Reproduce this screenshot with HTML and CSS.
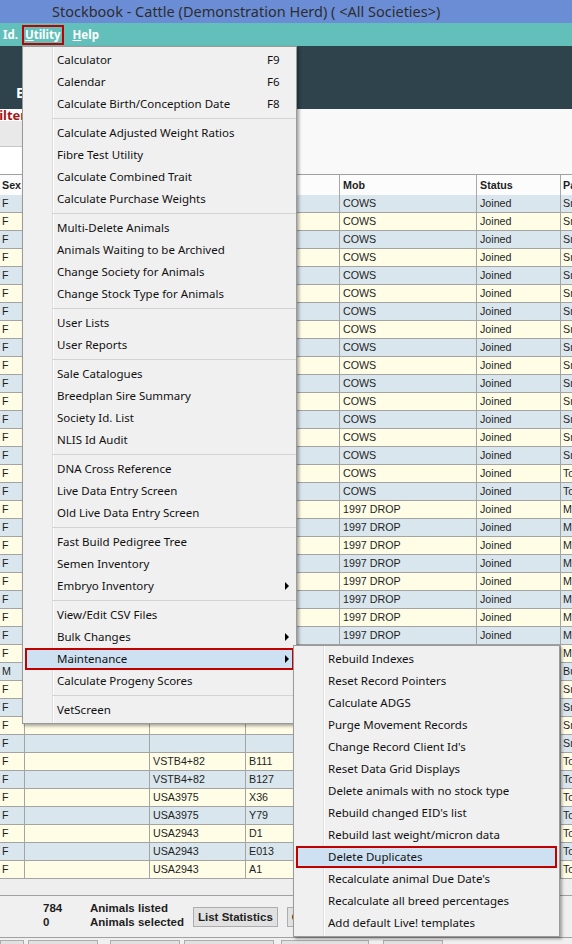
FILE: index.html
```html
<!DOCTYPE html>
<html lang="en">
<head>
  <meta charset="UTF-8" />
  <title>Stockbook - Cattle</title>
  <link rel="stylesheet" href="styles.css">
</head>
<body>
  <div class="titlebar">Stockbook - Cattle (Demonstration Herd) ( &lt;All Societies&gt;)</div>

  <div class="menubar">
    <span class="mitem">Id.</span>
    <span class="mitem open"><u>U</u>tility</span>
    <span class="mitem help"><u>H</u>elp</span>
  </div>

  <div class="banner"><span>E</span></div>

  <div class="filterzone">
    <div class="filter-left">
      <div class="filter-label">Filter</div>
      <div class="filter-band"></div>
    </div>
    <div class="filter-right"></div>
  </div>

  <div class="grid-head">
    <span>Sex</span><span></span><span></span><span></span><span>Mob</span><span>Status</span><span>Paddock</span>
  </div>
  <div class="grid-body">
    <div class="row b"><span>F</span><span></span><span></span><span></span><span>COWS</span><span>Joined</span><span>Small</span></div>
    <div class="row y"><span>F</span><span></span><span></span><span></span><span>COWS</span><span>Joined</span><span>Small</span></div>
    <div class="row b"><span>F</span><span></span><span></span><span></span><span>COWS</span><span>Joined</span><span>Small</span></div>
    <div class="row y"><span>F</span><span></span><span></span><span></span><span>COWS</span><span>Joined</span><span>Small</span></div>
    <div class="row b"><span>F</span><span></span><span></span><span></span><span>COWS</span><span>Joined</span><span>Small</span></div>
    <div class="row y"><span>F</span><span></span><span></span><span></span><span>COWS</span><span>Joined</span><span>Small</span></div>
    <div class="row b"><span>F</span><span></span><span></span><span></span><span>COWS</span><span>Joined</span><span>Small</span></div>
    <div class="row y"><span>F</span><span></span><span></span><span></span><span>COWS</span><span>Joined</span><span>Small</span></div>
    <div class="row b"><span>F</span><span></span><span></span><span></span><span>COWS</span><span>Joined</span><span>Small</span></div>
    <div class="row y"><span>F</span><span></span><span></span><span></span><span>COWS</span><span>Joined</span><span>Small</span></div>
    <div class="row b"><span>F</span><span></span><span></span><span></span><span>COWS</span><span>Joined</span><span>Small</span></div>
    <div class="row y"><span>F</span><span></span><span></span><span></span><span>COWS</span><span>Joined</span><span>Small</span></div>
    <div class="row b"><span>F</span><span></span><span></span><span></span><span>COWS</span><span>Joined</span><span>Small</span></div>
    <div class="row y"><span>F</span><span></span><span></span><span></span><span>COWS</span><span>Joined</span><span>Small</span></div>
    <div class="row b"><span>F</span><span></span><span></span><span></span><span>COWS</span><span>Joined</span><span>Small</span></div>
    <div class="row y"><span>F</span><span></span><span></span><span></span><span>COWS</span><span>Joined</span><span>Top</span></div>
    <div class="row b"><span>F</span><span></span><span></span><span></span><span>COWS</span><span>Joined</span><span>Top</span></div>
    <div class="row y"><span>F</span><span></span><span></span><span></span><span>1997 DROP</span><span>Joined</span><span>Middle</span></div>
    <div class="row b"><span>F</span><span></span><span></span><span></span><span>1997 DROP</span><span>Joined</span><span>Middle</span></div>
    <div class="row y"><span>F</span><span></span><span></span><span></span><span>1997 DROP</span><span>Joined</span><span>Middle</span></div>
    <div class="row b"><span>F</span><span></span><span></span><span></span><span>1997 DROP</span><span>Joined</span><span>Middle</span></div>
    <div class="row y"><span>F</span><span></span><span></span><span></span><span>1997 DROP</span><span>Joined</span><span>Middle</span></div>
    <div class="row b"><span>F</span><span></span><span></span><span></span><span>1997 DROP</span><span>Joined</span><span>Middle</span></div>
    <div class="row y"><span>F</span><span></span><span></span><span></span><span>1997 DROP</span><span>Joined</span><span>Middle</span></div>
    <div class="row b"><span>F</span><span></span><span></span><span></span><span>1997 DROP</span><span>Joined</span><span>Middle</span></div>
    <div class="row y"><span>F</span><span></span><span></span><span></span><span></span><span></span><span>Middle</span></div>
    <div class="row b"><span>M</span><span></span><span></span><span></span><span></span><span></span><span>Bull</span></div>
    <div class="row y"><span>F</span><span></span><span></span><span></span><span></span><span></span><span>Small</span></div>
    <div class="row b"><span>F</span><span></span><span></span><span></span><span></span><span></span><span>Small</span></div>
    <div class="row y"><span>F</span><span></span><span></span><span></span><span></span><span></span><span>Small</span></div>
    <div class="row b"><span>F</span><span></span><span></span><span></span><span></span><span></span><span>Small</span></div>
    <div class="row y"><span>F</span><span></span><span>VSTB4+82</span><span>B111</span><span></span><span></span><span>Top</span></div>
    <div class="row b"><span>F</span><span></span><span>VSTB4+82</span><span>B127</span><span></span><span></span><span>Top</span></div>
    <div class="row y"><span>F</span><span></span><span>USA3975</span><span>X36</span><span></span><span></span><span>Top</span></div>
    <div class="row b"><span>F</span><span></span><span>USA3975</span><span>Y79</span><span></span><span></span><span>Top</span></div>
    <div class="row y"><span>F</span><span></span><span>USA2943</span><span>D1</span><span></span><span></span><span>Top</span></div>
    <div class="row b"><span>F</span><span></span><span>USA2943</span><span>E013</span><span></span><span></span><span>Top</span></div>
    <div class="row y"><span>F</span><span></span><span>USA2943</span><span>A1</span><span></span><span></span><span>Top</span></div>
  </div>
  <div class="grid-end"></div>

  <div class="statusbar">
    <div class="counts"><div>784</div><div>0</div></div>
    <div class="count-labels"><div>Animals listed</div><div>Animals selected</div></div>
    <button class="btn">List Statistics</button>
    <button class="btn second">C</button>
  </div>

  <div class="bottombar">
    <span class="bbtn w1"></span>
    <span class="bbtn w2"></span>
    <span class="bbtn w3"></span>
    <span class="bbtn w4"></span>
    <span class="bbtn w5"></span>
    <span class="bbtn w6"></span>
  </div>

  <!-- Utility dropdown -->
  <div class="menu utility">
    <div class="mi"><span class="label">Calculator</span><span>F9</span></div>
    <div class="mi"><span class="label">Calendar</span><span>F6</span></div>
    <div class="mi"><span class="label">Calculate Birth/Conception Date</span><span>F8</span></div>
    <div class="sep"></div>
    <div class="mi">Calculate Adjusted Weight Ratios</div>
    <div class="mi">Fibre Test Utility</div>
    <div class="mi">Calculate Combined Trait</div>
    <div class="mi">Calculate Purchase Weights</div>
    <div class="sep"></div>
    <div class="mi">Multi-Delete Animals</div>
    <div class="mi">Animals Waiting to be Archived</div>
    <div class="mi">Change Society for Animals</div>
    <div class="mi">Change Stock Type for Animals</div>
    <div class="sep"></div>
    <div class="mi">User Lists</div>
    <div class="mi">User Reports</div>
    <div class="sep"></div>
    <div class="mi">Sale Catalogues</div>
    <div class="mi">Breedplan Sire Summary</div>
    <div class="mi">Society Id. List</div>
    <div class="mi">NLIS Id Audit</div>
    <div class="sep"></div>
    <div class="mi">DNA Cross Reference</div>
    <div class="mi">Live Data Entry Screen</div>
    <div class="mi">Old Live Data Entry Screen</div>
    <div class="sep"></div>
    <div class="mi">Fast Build Pedigree Tree</div>
    <div class="mi">Semen Inventory</div>
    <div class="mi"><span>Embryo Inventory</span><span class="arrow"></span></div>
    <div class="sep"></div>
    <div class="mi">View/Edit CSV Files</div>
    <div class="mi"><span>Bulk Changes</span><span class="arrow"></span></div>
    <div class="mi hot"><span>Maintenance</span><span class="arrow"></span></div>
    <div class="mi">Calculate Progeny Scores</div>
    <div class="sep"></div>
    <div class="mi">VetScreen</div>
  </div>

  <!-- Maintenance submenu -->
  <div class="menu submenu">
    <div class="mi">Rebuild Indexes</div>
    <div class="mi">Reset Record Pointers</div>
    <div class="mi">Calculate ADGS</div>
    <div class="mi">Purge Movement Records</div>
    <div class="mi">Change Record Client Id's</div>
    <div class="mi">Reset Data Grid Displays</div>
    <div class="mi">Delete animals with no stock type</div>
    <div class="mi">Rebuild changed EID's list</div>
    <div class="mi">Rebuild last weight/micron data</div>
    <div class="mi hot">Delete Duplicates</div>
    <div class="mi">Recalculate animal Due Date's</div>
    <div class="mi">Recalculate all breed percentages</div>
    <div class="mi">Add default Live! templates</div>
  </div>
</body>
</html>
```

FILE: styles.css
```css
* {
  margin: 0;
  padding: 0;
  box-sizing: border-box;
}

body {
  width: 572px;
  height: 944px;
  overflow: hidden;
  position: relative;
  background: #f0f0f0;
  font-family: 'Liberation Sans', Arial, sans-serif;
  font-size: 10.7px;
  color: #1e1e1e;
}

.titlebar {
  height: 23px;
  background: #6b8dd6;
  color: #2d2d2d;
  font-family: 'Noto Sans', sans-serif;
  font-size: 14.5px;
  line-height: 23px;
  padding-left: 52px;
  white-space: nowrap;
}

.menubar {
  height: 23px;
  background: #63bfb9;
  display: flex;
  align-items: center;
  font-family: 'Noto Sans', sans-serif;
  font-size: 11.5px;
  font-weight: bold;
  color: #ffffff;
}

.mitem {
  height: 20px;
  line-height: 16px;
  padding: 0 1px;
  border: 2px solid transparent;
}

.mitem.open {
  margin-left: 1px;
  border-color: #c10000;
}

.mitem.help {
  margin-left: 6px;
}

.banner {
  height: 63px;
  background: #2e434c;
  padding: 40px 0 0 16px;
  color: #ffffff;
  font-family: 'Noto Sans', sans-serif;
  font-size: 14px;
  font-weight: bold;
  line-height: 14px;
}

.filterzone {
  height: 65px;
  display: flex;
}

.filter-left {
  width: 260px;
  background: #ffffff;
  overflow: hidden;
}

.filter-label {
  height: 12px;
  margin-left: -8px;
  color: #a3161a;
  font-family: 'Noto Sans', sans-serif;
  font-size: 13px;
  font-weight: bold;
  line-height: 12px;
}

.filter-band {
  height: 26px;
  background: #e9e9e9;
  border-bottom: 1px solid #c6c6c6;
}

.filter-right {
  flex: 1;
  background: #f9f9f9;
}

.grid-head,
.row {
  display: grid;
  grid-template-columns: 25px 125px 96px 94px 137px 84px 11px;
}

.grid-head {
  height: 21px;
  background: #fcfcfc;
  border-top: 1px solid #a0a0a0;
  font-weight: bold;
}

.grid-head span {
  border-right: 1px solid #a8a8a8;
  padding-left: 3px;
  line-height: 20px;
  white-space: nowrap;
  overflow: hidden;
}

.row {
  height: 18px;
}

.row.b { background: #dae6ed; }
.row.y { background: #fffde6; }

.row span {
  border-right: 1px solid #a4a4a4;
  border-bottom: 1px solid #a4a4a4;
  padding-left: 3px;
  line-height: 17px;
  white-space: nowrap;
  overflow: hidden;
}

.row span:first-child,
.grid-head span:first-child {
  padding-left: 2px;
}

.row span:last-child,
.grid-head span:last-child {
  padding-left: 2px;
  border-right: none;
}

.grid-end {
  height: 17px;
  background: #eeeeee;
  border-bottom: 1px solid #a0a0a0;
}

.statusbar {
  height: 42px;
  display: flex;
  align-items: flex-start;
  padding-top: 5px;
  background: #f0f0f0;
  border-bottom: 1px solid #a0a0a0;
  font-size: 11.5px;
  font-weight: bold;
  line-height: 14px;
}

.counts {
  width: 47px;
  margin-left: 43px;
}

.count-labels {
  width: 103px;
}

.btn {
  height: 20px;
  margin-top: 6px;
  padding: 0 4px;
  background: #e1e1e1;
  border: 1px solid #adadad;
  font-family: 'Liberation Sans', Arial, sans-serif;
  font-size: 11.5px;
  font-weight: bold;
  color: #1e1e1e;
}

.btn.second {
  margin-left: 9px;
  width: 60px;
  text-align: left;
}

.bottombar {
  height: 8px;
  display: flex;
  padding-top: 2px;
}

.bbtn {
  height: 12px;
  background: #e1e1e1;
  border: 1px solid #adadad;
}

.w1 { width: 24px; }
.w2 { width: 70px; margin-left: 4px; }
.w3 { width: 70px; margin-left: 12px; }
.w4 { width: 90px; margin-left: 4px; }
.w5 { width: 88px; margin-left: 7px; }
.w6 { width: 60px; margin-left: 14px; }

/* popup menus */
.menu {
  position: absolute;
  padding: 2px 0;
  background-color: #f0f0f0;
  background-image: linear-gradient(#dedede, #dedede), linear-gradient(#ffffff, #ffffff);
  background-size: 1px 100%, 1px 100%;
  background-position: 29px 0, 30px 0;
  background-repeat: no-repeat;
  border: 1px solid #9a9a9a;
  box-shadow: 2px 2px 3px rgba(0, 0, 0, 0.35);
  font-family: 'Noto Sans', sans-serif;
  font-size: 11.5px;
  color: #111111;
}

.utility {
  left: 22px;
  top: 46px;
  width: 275px;
}

.submenu {
  left: 293px;
  top: 645px;
  width: 267px;
}

.mi {
  display: flex;
  align-items: center;
  height: 22px;
  line-height: 22px;
  margin: 0 2px;
  padding-left: 32px;
  white-space: nowrap;
}

.mi .label {
  width: 210px;
}

.mi .arrow {
  margin-left: auto;
  margin-right: 5px;
  width: 0;
  height: 0;
  border-left: 4px solid #000000;
  border-top: 4px solid transparent;
  border-bottom: 4px solid transparent;
}

.mi.hot {
  background: #cde1f2;
  outline: 2px solid #c10000;
  outline-offset: -2px;
}

.sep {
  height: 7px;
  margin-left: 29px;
  background: linear-gradient(#d3d3d3, #d3d3d3) 0 3px / 100% 1px no-repeat;
}
```
